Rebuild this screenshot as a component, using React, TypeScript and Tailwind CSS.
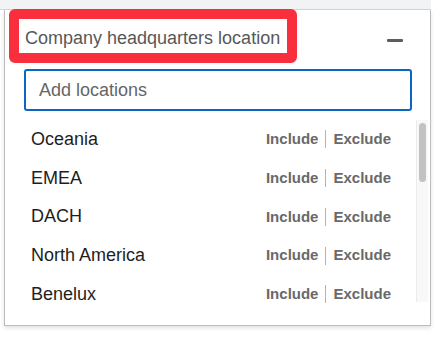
const LOCATIONS = ['Oceania', 'EMEA', 'DACH', 'North America', 'Benelux']

export default function App() {
  return (
    <div className="w-[442px] h-[338px] bg-white overflow-hidden font-['Liberation_Sans',Arial,sans-serif]">
      <div className="h-[10px] w-[431px] bg-[#f2f3f5] border-b border-[#d6d6d8]" />
      <div className="ml-[4px] w-[427px] h-[316px] border-x border-b border-[#bdbdbd] shadow-[0_2px_4px_rgba(0,0,0,0.12)] flex flex-col">
        <div className="flex items-center justify-between pr-[27px]">
          <div className="ml-[4px] -mt-px w-[288px] h-[54px] rounded-[6px] border-[10px] border-[#fa2f3e] flex items-center pl-[6px] pt-[5px]">
            <span className="text-[18px] text-[#585858] whitespace-nowrap">Company headquarters location</span>
          </div>
          <div className="w-[16px] h-[3px] mt-[7px] bg-[#5e5e5e] rounded-[1px]" />
        </div>

        <div className="ml-[19px] mt-[6px] w-[388px] h-[42px] rounded-[3px] border-2 border-[#0a66c2] flex items-center pl-[13px]">
          <span className="text-[18px] text-[#666666]">Add locations</span>
        </div>

        <div className="mt-[9px] flex h-[186px]">
          <div className="flex-1 overflow-hidden">
            {LOCATIONS.map(name => (
              <div key={name} className="h-[38.75px] flex items-center justify-between pl-[26px] pr-[25px]">
                <span className="text-[18px] text-[#1e1e1e]">{name}</span>
                <span className="text-[15px] font-semibold text-[#696969] flex items-center gap-[7px]">
                  Include
                  <span className="w-px h-[18px] bg-[#b4b4b4]" />
                  Exclude
                </span>
              </div>
            ))}
          </div>
          <div className="self-start h-[182px] w-[12px] mr-[2px] bg-[#f8f8f8] border-l border-[#ececec] pt-[3px] flex justify-center">
            <div className="w-[7px] h-[59px] rounded-full bg-[#c2c2c2]" />
          </div>
        </div>
      </div>
    </div>
  )
}
